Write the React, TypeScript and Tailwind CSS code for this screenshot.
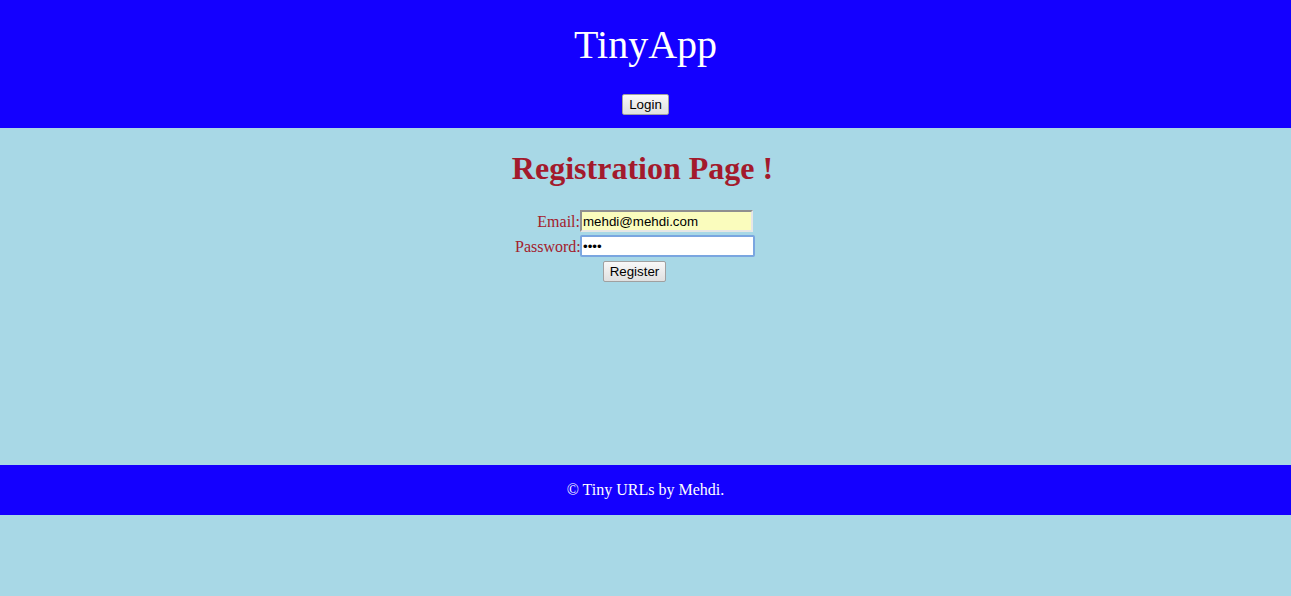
export default function App() {
  const btn =
    'rounded-[2px] border border-[#a0a0a0] bg-gradient-to-b from-[#f8f8f8] to-[#e0e0e0] px-[6px] text-[13.333px] leading-[19px] text-black [font-family:"Liberation_Sans",Arial,sans-serif]'

  return (
    <div className="min-h-screen bg-[#a8d8e6] [font-family:'Liberation_Serif','Times_New_Roman',serif]">
      <header className="flex flex-col items-center bg-[#1400ff] pt-[23px] pb-[13px]">
        <h1 className="text-[40px] leading-[44px] text-white">TinyApp</h1>
        <button className={`mt-[27px] ${btn}`}>Login</button>
      </header>

      <main className="h-[337px]">
        <h2 className="pt-[22px] pr-[6px] text-center text-[32px] font-bold leading-[36px] text-[#a31a2c]">
          Registration Page !
        </h2>
        <form className="mx-auto mt-[24px] w-[261px] pr-[22px]">
          <div className="grid grid-cols-[65px_175px] items-center gap-y-[3px] text-[16px] text-[#a3202c]">
            <label className="text-right leading-[21px]">Email:</label>
            <input
              value="mehdi@mehdi.com"
              readOnly
              className="h-[22px] w-[173px] border-2 border-t-[#8f8f8f] border-l-[#8f8f8f] border-r-[#e6e6e6] border-b-[#e6e6e6] bg-[#fafcbd] px-[1px] text-[13.333px] text-black outline-none [font-family:'Liberation_Sans',Arial,sans-serif]"
            />
            <label className="text-right leading-[21px]">Password:</label>
            <input
              type="password"
              value="1234"
              readOnly
              className="h-[22px] w-[175px] rounded-[2px] border-2 border-[#7aa6e0] bg-white px-[1px] text-[13.333px] text-black outline-none [font-family:'Liberation_Sans',Arial,sans-serif]"
            />
          </div>
          <div className="mt-[4px] flex justify-center">
            <button type="button" className={btn}>
              Register
            </button>
          </div>
        </form>
      </main>

      <footer className="flex h-[50px] items-center justify-center bg-[#1400ff] text-[16px] text-white">
        © Tiny URLs by Mehdi.
      </footer>
    </div>
  )
}
